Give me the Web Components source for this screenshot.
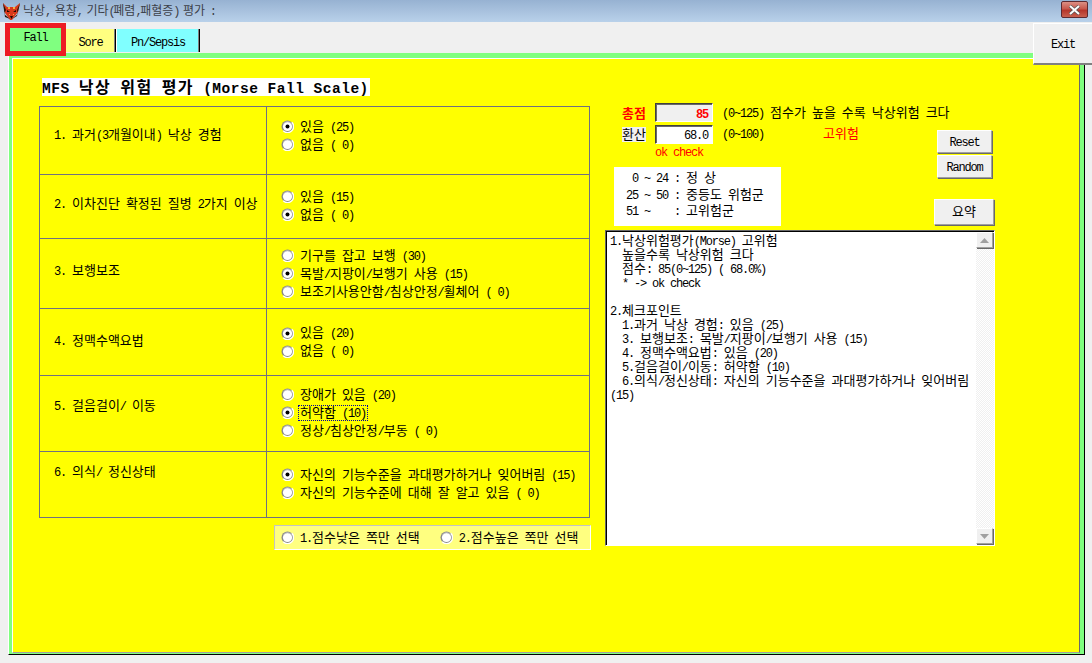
<!DOCTYPE html>
<html>
<head>
<meta charset="utf-8">
<style>
html,body{margin:0;height:100%;background:#f0f0f0;overflow:hidden}
</style>
</head>
<body>
<fall-window></fall-window>
<script>
// Gulim-che metrics: hangul 12px, everything else 6px
class GuText extends HTMLElement {
    constructor() {
        super();
        this.attachShadow({mode: 'open'});
    }
    connectedCallback() {
        let runs = this.textContent.match(/[\uac00-\ud7a3]+|[^\uac00-\ud7a3]+/g) || [];
        // no whitespace around the style: host is white-space:pre
        this.shadowRoot.innerHTML = `<style>
        :host {display:inline;white-space:pre}
        b {font:inherit;font-family:"Noto Sans CJK KR",sans-serif;font-size:var(--han,13px);letter-spacing:var(--han-ls,0);line-height:0;vertical-align:1px}
        i {font:inherit;font-family:"Liberation Mono",monospace;font-size:var(--lat,12px);letter-spacing:var(--lat-ls,-1.2px);line-height:0;vertical-align:1px}
        </style>` + runs.map(r => /[\uac00-\ud7a3]/.test(r) ? `<b>${r}</b>` : `<i>${r}</i>`).join('');
    }
}
customElements.define('gu-text', GuText);

class RadioOpt extends HTMLElement {
    constructor() {
        super();
        let on = this.hasAttribute('checked');
        let focus = this.hasAttribute('focus');
        this.attachShadow({mode: 'open'}).innerHTML = `
        <style>
        :host {display:flex;align-items:center;height:18px;font-size:12px;line-height:14px}
        svg {width:13px;height:13px;flex:none;margin-right:5px}
        span {padding:0 1px;border:1px solid transparent;margin-left:-1px;height:14px;display:block;white-space:pre;line-height:14px}
        span.focus {border:1px dotted #00a}
        </style>
        <svg viewBox="0 0 13 13">
            <circle cx="6.5" cy="6.5" r="6" fill="#8a8a8a"/>
            <path d="M2.2 10.8A6 6 0 0 0 10.8 2.2" fill="none" stroke="#fff" stroke-width="1.4"/>
            <circle cx="6.5" cy="6.5" r="4.6" fill="#fff"/>
            <path d="M3.2 3.2A4.6 4.6 0 0 1 9.8 3.2" fill="none" stroke="#c8c8c8" stroke-width="1"/>
            ${on ? '<circle cx="6.5" cy="6.5" r="2" fill="#000"/>' : ''}
        </svg>
        <span class="${focus ? 'focus' : ''}"><slot></slot></span>`;
    }
}
customElements.define('radio-opt', RadioOpt);

class OldButton extends HTMLElement {
    constructor() {
        super();
        this.attachShadow({mode: 'open'}).innerHTML = `
        <style>
        :host {
            display:flex;align-items:center;justify-content:center;box-sizing:border-box;
            background:#f0f0f0;font-size:12px;line-height:14px;
            border:1px solid;border-color:#fff #a0a0a0 #a0a0a0 #fff;
            box-shadow:1px 1px 0 #696969;
        }
        </style>
        <slot></slot>`;
    }
}
customElements.define('old-button', OldButton);

class ScoreRow extends HTMLElement {
    constructor() {
        super();
        let lift = this.getAttribute('lift') || 0;
        let drop = this.getAttribute('drop') || 0;
        this.attachShadow({mode: 'open'}).innerHTML = `
        <style>
        :host {display:grid;grid-template-columns:227px 1fr;border-bottom:1px solid #707080;box-sizing:border-box;font-size:12px;line-height:14px}
        :host(:last-child) {border-bottom:0}
        .q {display:flex;align-items:center;padding:0 0 ${lift}px 14px;border-right:1px solid #707080;white-space:pre}
        .a {display:flex;flex-direction:column;justify-content:center;padding:0 0 ${drop}px 14px}
        </style>
        <div class="q"><slot name="q"></slot></div>
        <div class="a"><slot></slot></div>`;
    }
}
customElements.define('score-row', ScoreRow);

class ScoreTable extends HTMLElement {
    constructor() {
        super();
        this.attachShadow({mode: 'open'}).innerHTML = `
        <style>
        :host {
            display:grid;box-sizing:border-box;width:551px;height:412px;
            grid-template-rows:68px 64px 70px 67px 76px 1fr;
            border:1px solid #707080;
        }
        </style>
        <slot></slot>`;
    }
}
customElements.define('score-table', ScoreTable);

class TabBar extends HTMLElement {
    constructor() {
        super();
        this.attachShadow({mode: 'open'}).innerHTML = `
        <style>
        :host {display:flex;align-items:flex-start;height:31px;padding:0 0 0 5px;font-size:12px;line-height:14px}
        .fall {
            box-sizing:border-box;width:61px;height:33px;border:5px solid #ed1c24;
            margin-top:1px;padding-top:2px;
            background:#80ff80;text-align:center;position:relative;z-index:2;
        }
        .tab {
            box-sizing:border-box;height:23px;margin-top:7px;
            border-right:1px solid #000;box-shadow:inset -1px 0 0 #808080;
            display:flex;align-items:center;justify-content:center;padding-top:2px;
        }
        .sore {width:50px;background:#ffff80;}
        .pn {width:84px;background:#80ffff;border-left:1px solid #fff}
        </style>
        <div class="fall"><gu-text>Fall</gu-text></div>
        <div class="tab sore"><gu-text>Sore</gu-text></div>
        <div class="tab pn"><gu-text>Pn/Sepsis</gu-text></div>`;
    }
}
customElements.define('tab-bar', TabBar);

class TitleBar extends HTMLElement {
    constructor() {
        super();
        this.attachShadow({mode: 'open'}).innerHTML = `
        <style>
        :host {
            display:flex;align-items:center;height:22px;box-sizing:border-box;padding:0 4px 0 2px;
            background:linear-gradient(#97b2d2,#b9d1ea);color:#3c4048;font-size:12px;line-height:14px;
            --han:12px;--lat-ls:-2.4px;
        }
        svg.fox {width:19px;height:19px;flex:none;margin-right:2px}
        .txt {flex:1;white-space:pre}
        .close {
            width:27px;height:17px;margin-top:-3px;box-sizing:border-box;border:1px solid #5e2a30;border-radius:2px;
            background:linear-gradient(#dc8f84 0,#c9584c 45%,#b5352a 55%,#c8604f 100%);
            display:flex;align-items:center;justify-content:center;
        }
        </style>
        <svg class="fox" viewBox="0 0 19 19">
            <path d="M1 1 L5 5 H13 L18 1 L16 10 L10 18 H8 L3 11Z" fill="#d8391c"/>
            <path d="M1 1 L4 8 L2 12 L8 17 L3 15Z M18 1 L15 8 L16 12 L10 17 L15 14Z" fill="#2a1408"/>
            <path d="M5 8 L8 10 L5 10Z M14 8 L11 10 L14 10Z M8 14h3l-1.500 3Z" fill="#1a0a04"/>
            <path d="M6 5h2v2H6z M11 5h2v2h-2z M7 12h1v1H7z M11 12h1v1h-1z" fill="#f2b040"/>
        </svg>
        <div class="txt"><gu-text>낙상, 욕창, 기타(폐렴,패혈증) 평가 :</gu-text></div>
        <div class="close">
            <svg width="13" height="10" viewBox="0 0 13 10"><path d="M2 1 L11 9 M11 1 L2 9" stroke="#555" stroke-width="3.400"/><path d="M2 1 L11 9 M11 1 L2 9" stroke="#fff" stroke-width="2"/></svg>
        </div>`;
    }
}
customElements.define('title-bar', TitleBar);

class ScrollBox extends HTMLElement {
    constructor() {
        super();
        this.attachShadow({mode: 'open'}).innerHTML = `
        <style>
        :host {
            display:flex;box-sizing:border-box;background:#fff;height:316px;width:390px;
            border:1px solid;border-color:#696969 #fff #fff #696969;box-shadow:inset 1px 1px 0 #000;
            font-size:12px;line-height:14px;
        }
        .text {flex:1;padding:3px 0 0 4px;white-space:pre}
        .bar {
            width:18px;flex:none;display:flex;flex-direction:column;justify-content:space-between;
            background:repeating-conic-gradient(#f0f0f0 0 25%,#fff 0 50%) 0 0/2px 2px;
            margin:1px 0 1px 0;
        }
        .btn {
            width:17px;height:16px;box-sizing:border-box;background:#f0f0f0;
            border:1px solid;border-color:#fff #a0a0a0 #a0a0a0 #fff;box-shadow:1px 1px 0 #696969;
            display:flex;align-items:center;justify-content:center;
        }
        </style>
        <div class="text"><slot></slot></div>
        <div class="bar">
            <div class="btn"><svg width="9" height="5" viewBox="0 0 9 5"><path d="M4.500 0 L9 5 H0Z" fill="#a0a0a0"/></svg></div>
            <div class="btn"><svg width="9" height="5" viewBox="0 0 9 5"><path d="M4.500 5 L9 0 H0Z" fill="#a0a0a0"/></svg></div>
        </div>`;
    }
}
customElements.define('scroll-box', ScrollBox);

class FallWindow extends HTMLElement {
    constructor() {
        super();
        const opt = (t, a = '') => `<radio-opt ${a}><gu-text>${t}</gu-text></radio-opt>`;
        const row = (q, lift, drop, opts) => `<score-row lift="${lift}" drop="${drop}"><gu-text slot="q">${q}</gu-text>${opts}</score-row>`;
        this.attachShadow({mode: 'open'}).innerHTML = `
        <style>
        :host {display:block;position:relative;height:663px;font-family:"Noto Sans CJK KR",sans-serif;color:#000}
        .frame {
            margin:0 7px 0 8px;height:602px;box-sizing:border-box;
            border-left:1px solid #fff;border-bottom:1px solid #000;border-right:1px solid #000;
            background:#80ff80;padding:5px 4px 0 3px;
        }
        .yellow {
            background:#ff0;height:595px;box-sizing:border-box;
            border-top:1px solid #fff;border-left:1px solid #fff;border-right:1px solid #696969;border-bottom:1px solid #a0a0a0;
            display:grid;grid-template-columns:592px 1fr;
            padding:19px 0 0 26px;
        }
        h1 {
            margin:0 0 10px 3px;height:18px;width:328px;background:#fff;font-weight:bold;font-size:16px;line-height:19px;
            --han:16px;--han-ls:1.4px;--lat:14.5px;--lat-ls:.5px;white-space:pre;overflow:hidden;
        }
        .mode {
            box-sizing:border-box;width:317px;height:25px;margin:7px 0 0 235px;
            background:#ffff80;border:1px solid;border-color:#c4c4c4 #fff #fff #c4c4c4;
            display:flex;align-items:center;padding-left:6px;gap:18px;
        }
        .right {display:flex;flex-direction:column;padding:23px 0 0 0;margin-left:-26px}
        .top {display:grid;grid-template-columns:50px 58px 1fr;grid-template-rows:22px 22px 18px;font-size:12px;line-height:14px;height:66px;align-items:center}
        .top .lbl {justify-self:start;margin-left:17px;line-height:15px}
        .top .r1 {padding-top:2px}
        .ok {white-space:pre;margin-top:-4px}
        .field {
            box-sizing:border-box;width:58px;height:19px;border:1px solid;border-color:#404040 #fff #fff #404040;
            box-shadow:inset 1px 1px 0 #696969;text-align:right;padding-right:4px;line-height:17px;background:#fff;
        }
        .field.sum {background:#f0f0f0;color:#f00;font-weight:bold;line-height:19px}
        .red {color:#f00}
        .desc {display:flex;padding-left:9px;white-space:pre}
        .mid {display:flex;height:63px}
        .scale {
            box-sizing:border-box;width:167px;height:59px;margin:0 0 0 9px;background:#fff;font-size:12px;
            padding:3px 0 0 6px;line-height:16.500px;white-space:pre;
        }
        .btns {display:flex;flex-direction:column;align-items:flex-start;margin-left:156px;margin-top:-37px;gap:2px}
        .btns old-button {width:55px;height:23px}
        .btns old-button.sum {width:60px;height:26px;margin:19px 0 0 -3px}
        .exit {position:absolute;left:1033px;top:23px;width:59px;height:42px;border-width:1px 0 2px 1px;border-bottom-color:#808080;box-shadow:none}
        </style>
        <title-bar></title-bar>
        <tab-bar></tab-bar>
        <div class="frame"><div class="yellow">
            <div>
                <h1><gu-text>MFS 낙상 위험 평가 (Morse Fall Scale)</gu-text></h1>
                <score-table>
                    ${row('1. 과거(3개월이내) 낙상 경험', 12, 10, opt('있음 (25)', 'checked') + opt('없음 ( 0)'))}
                    ${row('2. 이차진단 확정된 질병 2가지 이상', 6, 2, opt('있음 (15)') + opt('없음 ( 0)', 'checked'))}
                    ${row('3. 보행보조', 6, 0, opt('기구를 잡고 보행 (30)') + opt('목발/지팡이/보행기 사용 (15)', 'checked') + opt('보조기사용안함/침상안정/휠체어 ( 0)'))}
                    ${row('4. 정맥수액요법', 3, 0, opt('있음 (20)', 'checked') + opt('없음 ( 0)'))}
                    ${row('5. 걸음걸이/ 이동', 16, 2, opt('장애가 있음 (20)') + opt('허약함 (10)', 'checked focus') + opt('정상/침상안정/부동 ( 0)'))}
                    ${row('6. 의식/ 정신상태', 26, 2, opt('자신의 기능수준을 과대평가하거나 잊어버림 (15)', 'checked') + opt('자신의 기능수준에 대해 잘 알고 있음 ( 0)'))}
                </score-table>
                <div class="mode">
                    ${opt('1.점수낮은 쪽만 선택')}
                    ${opt('2.점수높은 쪽만 선택')}
                </div>
            </div>
            <div class="right">
                <div class="top">
                    <div class="lbl red r1" style="font-weight:bold"><gu-text>총점</gu-text></div>
                    <div class="field sum"><gu-text>85</gu-text></div>
                    <div class="desc r1"><gu-text>(0~125) 점수가 높을 수록 낙상위험 크다</gu-text></div>
                    <div class="lbl" style="background:#f0f0f0"><gu-text>환산</gu-text></div>
                    <div class="field"><gu-text>68.0</gu-text></div>
                    <div class="desc"><gu-text>(0~100)</gu-text><span style="width:59px"></span><gu-text class="red">고위험</gu-text></div>
                    <div></div>
                    <div class="red ok"><gu-text>ok check</gu-text></div>
                    <div></div>
                </div>
                <div class="mid">
                    <div class="scale"><gu-text>  0 ~ 24 : 정 상</gu-text>
<gu-text> 25 ~ 50 : 중등도 위험군</gu-text>
<gu-text> 51 ~    : 고위험군</gu-text></div>
                    <div class="btns">
                        <old-button><gu-text>Reset</gu-text></old-button>
                        <old-button><gu-text>Random</gu-text></old-button>
                        <old-button class="sum"><gu-text>요약</gu-text></old-button>
                    </div>
                </div>
                <scroll-box><gu-text>1.낙상위험평가(Morse) 고위험</gu-text>
<gu-text>  높을수록 낙상위험 크다</gu-text>
<gu-text>  점수: 85(0~125) ( 68.0%)</gu-text>
<gu-text>  * -> ok check</gu-text>

<gu-text>2.체크포인트</gu-text>
<gu-text>  1.과거 낙상 경험: 있음 (25)</gu-text>
<gu-text>  3. 보행보조: 목발/지팡이/보행기 사용 (15)</gu-text>
<gu-text>  4. 정맥수액요법: 있음 (20)</gu-text>
<gu-text>  5.걸음걸이/이동: 허약함 (10)</gu-text>
<gu-text>  6.의식/정신상태: 자신의 기능수준을 과대평가하거나 잊어버림</gu-text>
<gu-text>(15)</gu-text></scroll-box>
            </div>
        </div></div>
        <old-button class="exit"><gu-text>Exit</gu-text></old-button>`;
    }
}
customElements.define('fall-window', FallWindow);
</script>
</body>
</html>
